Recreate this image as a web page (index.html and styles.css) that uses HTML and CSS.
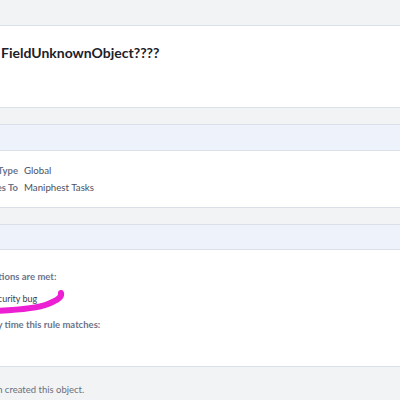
FILE: index.html
```html
<!DOCTYPE html>
<html lang="en">
<head>
<meta charset="UTF-8">
<title>Herald Rule</title>
<meta name="viewport" content="width=device-width,initial-scale=1">
<link rel="stylesheet" href="styles.css">
</head>
<body>
<div class="page">

  <!-- rule header -->
  <div class="head-box">
    <h1 class="title">FieldUnknownObject????</h1>
  </div>

  <!-- details -->
  <section class="box">
    <div class="box-head"></div>
    <div class="box-body props">
      <div class="prop"><span class="prop-key">Rule Type</span><span class="prop-val">Global</span></div>
      <div class="prop"><span class="prop-key">Applies To</span><span class="prop-val">Maniphest Tasks</span></div>
    </div>
  </section>

  <!-- rule text -->
  <section class="box">
    <div class="box-head"></div>
    <div class="box-body rule">
      <p class="rule-label">When all of these conditions are met:</p>
      <p class="rule-cond">Title contains security bug</p>
      <p class="rule-label rule-act">Take these actions every time this rule matches:</p>
    </div>
  </section>

  <div class="timeline">
    <p class="event">admin created this object.</p>
  </div>
</div>

<!-- hand-drawn annotation -->
<svg class="scribble" width="400" height="400" viewBox="0 0 400 400">
  <path d="M-6 311 C 20 310 38 308 48 304 C 58 300 62 297 61 293" fill="none" stroke="#ec1fd3" stroke-width="6" stroke-linecap="round"/>
</svg>
</body>
</html>
```
FILE: styles.css
```css
:root{
  --page:#f2f3f5;--line:#d9e0e8;--blue:#eef2fb;
  --key:#6b748c;--val:#4b505e;--ink:#1d2029;
}
*{box-sizing:border-box;margin:0}
body{font-family:Lato,"Open Sans",sans-serif;background:var(--page);overflow:hidden;width:400px;height:400px;position:relative}
.page{margin-left:-94px;width:620px;padding-top:25px}

/* header */
.head-box{background:#fff;border-top:1px solid var(--line);border-bottom:1px solid var(--line);height:83px;padding:19px 0 0 95px}
.title{font-size:14px;line-height:16px;font-weight:700;color:var(--ink)}

/* boxes */
.box{margin-top:16px;border-top:1px solid var(--line);border-bottom:1px solid var(--line);background:#fff}
.box-head{height:26px;background:var(--blue);border-bottom:1px solid var(--line)}
.box + .box .box-head{height:25px}
.props{padding:11px 0;font-size:9.5px;line-height:17px}
.prop{display:grid;grid-template-columns:112px 1fr;gap:6px}
.prop-key{text-align:right;color:var(--key);font-weight:700;font-size:9.5px}
.prop-val{color:var(--val);font-size:9.7px}

.rule{height:116px;padding-top:19px;font-size:9.5px;line-height:16px}
.rule-label{font-weight:700;color:var(--key);margin-left:-7px}
.rule-cond{margin-top:6px;padding-left:28px;color:#3a3e4a;font-size:9px}
.rule-act{margin-top:10px}

/* timeline */
.timeline{padding:15px 0 0 71px;font-size:9.5px;line-height:16px;color:#6a6f7c}

/* annotation overlay */
.scribble{position:absolute;left:0;top:0;pointer-events:none}
```
